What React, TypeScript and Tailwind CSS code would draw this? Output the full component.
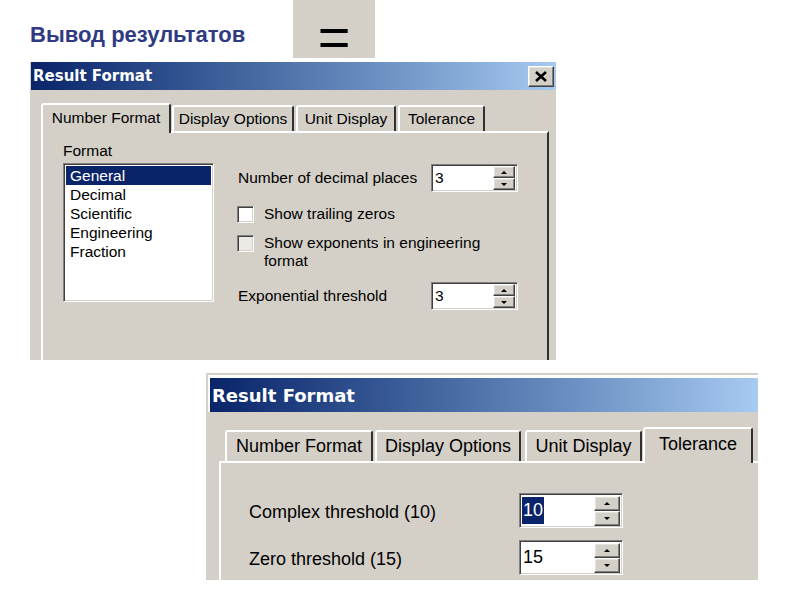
import React from 'react';

const UI_FONT = "font-['Liberation_Sans',Arial,sans-serif]";
const TITLE_FONT = "font-['DejaVu_Sans',Verdana,sans-serif]";

// raised / sunken win2k bevels
const RAISED =
  'border border-t-white border-l-white border-r-[#404040] border-b-[#404040] shadow-[inset_-1px_-1px_0_#808080,inset_1px_1px_0_#e4e2dc]';
const SUNKEN =
  'border border-t-[#808080] border-l-[#808080] border-r-white border-b-white shadow-[inset_1px_1px_0_#404040,inset_-1px_-1px_0_#d4d0c8]';

function Arrow({ up }: { up?: boolean }) {
  return up ? (
    <span className="h-0 w-0 border-x-[3px] border-b-[3px] border-x-transparent border-b-black" />
  ) : (
    <span className="h-0 w-0 border-x-[3px] border-t-[3px] border-x-transparent border-t-black" />
  );
}

function SpinBox({ value, big, selected }: { value: string; big?: boolean; selected?: boolean }) {
  const box = big ? 'h-[35px] w-[104px] text-[18px]' : 'h-[28px] w-[87px] text-[15.5px]';
  const btn = big ? 'h-[15px] w-[26px]' : 'h-[12px] w-[22px]';
  return (
    <div className={`flex shrink-0 items-center justify-between bg-white pr-[2px] pl-[2px] ${SUNKEN} ${box}`}>
      {selected ? (
        <span className="inline-block bg-[#0a246a] px-[1px] leading-[27px] text-white">{value}</span>
      ) : (
        <span className="px-[1px] text-black">{value}</span>
      )}
      <div className="flex flex-col">
        <div className={`flex items-center justify-center bg-[#d4d0c8] ${RAISED} ${btn}`}>
          <Arrow up />
        </div>
        <div className={`flex items-center justify-center bg-[#d4d0c8] ${RAISED} ${btn}`}>
          <Arrow />
        </div>
      </div>
    </div>
  );
}

function Checkbox({ gray }: { gray?: boolean }) {
  return <div className={`mt-[1px] h-[17px] w-[17px] shrink-0 ${SUNKEN} ${gray ? 'bg-[#eceae6]' : 'bg-white'}`} />;
}

const TAB_BASE =
  'flex items-center justify-center rounded-t-[3px] border-t-2 border-l-2 border-r-2 border-t-white border-l-white border-r-[#303030] bg-[#d4d0c8] whitespace-nowrap';

export default function App() {
  const formats = ['General', 'Decimal', 'Scientific', 'Engineering', 'Fraction'];

  return (
    <div className={`h-[600px] w-[800px] overflow-hidden bg-white ${UI_FONT}`}>
      {/* heading */}
      <div className="flex h-[58px] pl-[30px]">
        <div className="w-[263px] pt-[23px] text-[22px] leading-[24px] font-bold text-[#2f3a82]">
          Вывод результатов
        </div>
        <div className="flex h-[58px] w-[82px] items-start justify-center bg-[#d4d0c8] pt-[17px] text-[56px] leading-[40px] text-black">
          =
        </div>
      </div>

      {/* dialog 1: Number Format */}
      <div className="mt-[4px] ml-[30px] h-[298px] w-[526px] overflow-hidden bg-[#d4d0c8] text-[15.5px] text-black">
        <div className="ml-[1px] flex h-[28px] items-center justify-between bg-gradient-to-r from-[#0a246a] to-[#a6caf0] pr-[2px] pl-[2px]">
          <span className={`${TITLE_FONT} text-[15px] font-bold text-white`}>Result Format</span>
          <button className={`flex h-[21px] w-[26px] items-center justify-center bg-[#d4d0c8] ${RAISED}`}>
            <svg width="14" height="11" viewBox="0 0 14 11">
              <path d="M2 1 L12 10 M12 1 L2 10" stroke="black" strokeWidth="2.6" />
            </svg>
          </button>
        </div>

        <div className="pt-[13px]">
          <div className="flex items-end pl-[11px]">
            <div className={`${TAB_BASE} relative z-10 -mb-[2px] h-[30px] w-[130px] pb-[2px]`}>Number Format</div>
            <div className={`${TAB_BASE} ml-[1px] h-[26px] w-[122px]`}>Display Options</div>
            <div className={`${TAB_BASE} ml-[2px] h-[26px] w-[100px]`}>Unit Display</div>
            <div className={`${TAB_BASE} ml-[2px] h-[26px] w-[87px]`}>Tolerance</div>
          </div>

          <div className="ml-[11px] h-[300px] w-[508px] border-t-2 border-r-2 border-l-2 border-t-white border-r-[#303030] border-l-white">
            <div className="flex pt-[9px] pl-[20px]">
              <div>
                <div className="leading-[18px]">Format</div>
                <div className={`mt-[3px] h-[139px] w-[151px] bg-white px-[2px] py-[2px] ${SUNKEN}`}>
                  {formats.map((f, i) => (
                    <div
                      key={f}
                      className={`h-[19px] pl-[4px] leading-[19px] ${i === 0 ? 'bg-[#0a246a] text-white' : 'text-black'}`}
                    >
                      {f}
                    </div>
                  ))}
                </div>
              </div>

              <div className="ml-[23px] pt-[22px]">
                <div className="flex h-[28px] items-center">
                  <span className="w-[194px] pl-[1px]">Number of decimal places</span>
                  <SpinBox value="3" />
                </div>
                <div className="mt-[13px] flex items-start gap-[10px]">
                  <Checkbox />
                  <span className="leading-[18px]">Show trailing zeros</span>
                </div>
                <div className="mt-[11px] flex items-start gap-[10px]">
                  <Checkbox gray />
                  <span className="leading-[18px]">
                    Show exponents in engineering
                    <br />
                    format
                  </span>
                </div>
                <div className="mt-[12px] flex h-[28px] items-center">
                  <span className="w-[194px] pl-[1px]">Exponential threshold</span>
                  <SpinBox value="3" />
                </div>
              </div>
            </div>
          </div>
        </div>
      </div>

      {/* dialog 2: Tolerance */}
      <div className="mt-[13px] ml-[206px] h-[207px] w-[552px] overflow-hidden bg-[#d4d0c8] text-[18px] text-black">
        <div className="border-t-2 border-l-2 border-[#d4d0c8]">
          <div className="border-t-[3px] border-l-2 border-white">
            <div className="flex h-[34px] items-center bg-gradient-to-r from-[#0a246a] to-[#a6caf0] pl-[2px]">
              <span className={`${TITLE_FONT} text-[18px] font-bold text-white`}>Result Format</span>
            </div>
          </div>
        </div>

        <div className="pt-[15px]">
          <div className="flex items-end pl-[19px]">
            <div className={`${TAB_BASE} h-[31px] w-[148px]`}>Number Format</div>
            <div className={`${TAB_BASE} ml-[2px] h-[31px] w-[146px]`}>Display Options</div>
            <div className={`${TAB_BASE} ml-[4px] h-[31px] w-[117px]`}>Unit Display</div>
            <div className={`${TAB_BASE} relative z-10 ml-[1px] -mb-[2px] h-[36px] w-[110px] pb-[4px]`}>Tolerance</div>
          </div>

          <div className="ml-[13px] h-[200px] border-t-2 border-l-2 border-white">
            <div className="pt-[30px] pl-[28px]">
              <div className="flex h-[35px] items-center">
                <span className="w-[270px] pt-[4px]">Complex threshold (10)</span>
                <SpinBox value="10" big selected />
              </div>
              <div className="mt-[12px] flex h-[35px] items-center">
                <span className="w-[270px] pt-[4px]">Zero threshold (15)</span>
                <SpinBox value="15" big />
              </div>
            </div>
          </div>
        </div>
      </div>
    </div>
  );
}
